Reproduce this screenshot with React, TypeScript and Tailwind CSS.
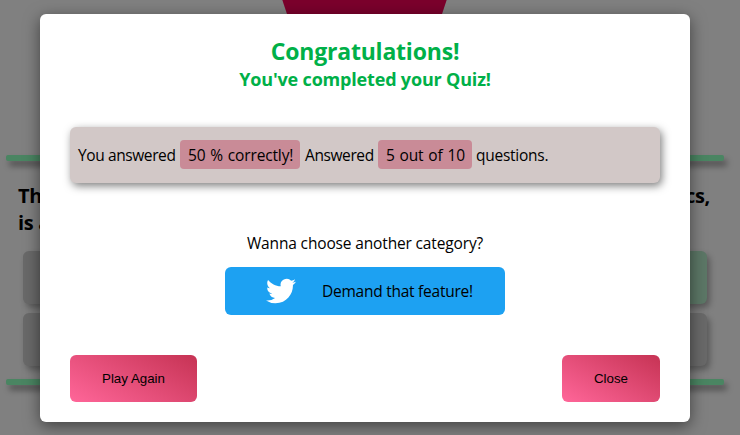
import React from "react";

const answerBase = "h-[53px] rounded-md shadow-[3px_4px_6px_rgba(0,0,0,0.3)]";
const actionButton =
  "h-[47px] rounded-md bg-[linear-gradient(30deg,#ff6699_0%,#c63354_100%)] px-8 font-['Liberation_Sans',Arial,sans-serif] text-[13.333px] text-black";

function Divider() {
  return <div className="ml-1.5 h-1.5 w-[718px] rounded-[2px] bg-[#4a8562] shadow-[3px_5px_6px_rgba(0,0,0,0.4)]" />;
}

function QuizPage() {
  return (
    <div className="flex h-full flex-col">
      <div className="mx-auto h-[155px] w-[166px] shrink-0 bg-[#7b002c] [clip-path:polygon(0.5%_0,99.5%_0,84%_50%,16%_50%)] -translate-x-[5.5px]" />
      <Divider />
      <div className="mt-[21px] ml-[18px] w-[692px] text-[20px] leading-[27px] font-bold tracking-[-0.3px]">
        <div className="flex justify-between">
          <span>Th</span>
          <span>cs,</span>
        </div>
        <div>is a</div>
      </div>
      <div className="mt-[15px] ml-[23px] grid w-[684px] grid-cols-2 gap-x-3 gap-y-[9px]">
        <div className={`${answerBase} bg-[#696969]`} />
        <div className={`${answerBase} bg-[#5c7766]`} />
        <div className={`${answerBase} bg-[#696969]`} />
        <div className={`${answerBase} bg-[#696969]`} />
      </div>
      <div className="h-[13px] shrink-0" />
      <Divider />
    </div>
  );
}

function TwitterBird() {
  return (
    <svg viewBox="0 0 24 24" className="h-[30px] w-[30px]" fill="#fff" aria-hidden="true">
      <path d="M23.953 4.57a10 10 0 01-2.825.775 4.958 4.958 0 002.163-2.723c-.951.555-2.005.959-3.127 1.184a4.92 4.92 0 00-8.384 4.482C7.69 8.095 4.067 6.13 1.64 3.162a4.822 4.822 0 00-.666 2.475c0 1.71.87 3.213 2.188 4.096a4.904 4.904 0 01-2.228-.616v.06a4.923 4.923 0 003.946 4.827 4.996 4.996 0 01-2.212.085 4.936 4.936 0 004.604 3.417 9.867 9.867 0 01-6.102 2.105c-.39 0-.779-.023-1.17-.067a13.995 13.995 0 007.557 2.209c9.053 0 13.998-7.496 13.998-13.985 0-.21 0-.42-.015-.63A9.935 9.935 0 0024 4.59z" />
    </svg>
  );
}

function ResultDialog() {
  return (
    <div
      role="dialog"
      className="absolute top-[14px] left-10 flex h-[408px] w-[650px] flex-col rounded-md bg-white px-[30px] pt-[21px] pb-5 shadow-[0_4px_16px_rgba(0,0,0,0.5)]"
    >
      <h1 className="text-center text-[23px] leading-8 font-bold tracking-[-0.2px] text-[#00b048]">Congratulations!</h1>
      <h2 className="text-center text-[18px] leading-6 font-bold tracking-[-0.18px] text-[#00b048]">You've completed your Quiz!</h2>
      <div className="mt-9 flex h-14 shrink-0 items-start rounded-md bg-[#d2c8c7] px-2 pt-[13px] text-[15.5px] leading-[29px] tracking-[-0.4px] whitespace-nowrap shadow-[2px_3px_8px_rgba(0,0,0,0.5)]">
        <span className="w-[102px] pt-px">You answered</span>
        <span className="h-[29px] w-[120px] rounded bg-[#c98b97] pt-px pl-2 tracking-[-0.15px] [word-spacing:1px]">50 % correctly!</span>
        <span className="ml-[5px] w-[73px] pt-px">Answered</span>
        <span className="h-[29px] w-[94px] rounded bg-[#c98b97] pt-px pl-2 tracking-[-0.15px] [word-spacing:1px]">5 out of 10</span>
        <span className="ml-1 pt-px tracking-[-0.25px]">questions.</span>
      </div>
      <p className="mt-12 text-center text-[15.5px] leading-6 tracking-[-0.15px]">Wanna choose another category?</p>
      <button className="mx-auto mt-3 flex h-12 w-[280px] shrink-0 items-center rounded-md bg-[#1da1f2] pl-[41px] text-[15.5px] tracking-[-0.25px] whitespace-nowrap">
        <TwitterBird />
        <span className="ml-[26px] pt-0.5">Demand that feature!</span>
      </button>
      <div className="mt-auto flex justify-between">
        <button className={actionButton}>Play Again</button>
        <button className={actionButton}>Close</button>
      </div>
    </div>
  );
}

export default function App() {
  return (
    <main className="relative h-[435px] w-[740px] overflow-hidden bg-[#808080] font-['Open_Sans','Noto_Sans',sans-serif] text-black">
      <QuizPage />
      <ResultDialog />
    </main>
  );
}
